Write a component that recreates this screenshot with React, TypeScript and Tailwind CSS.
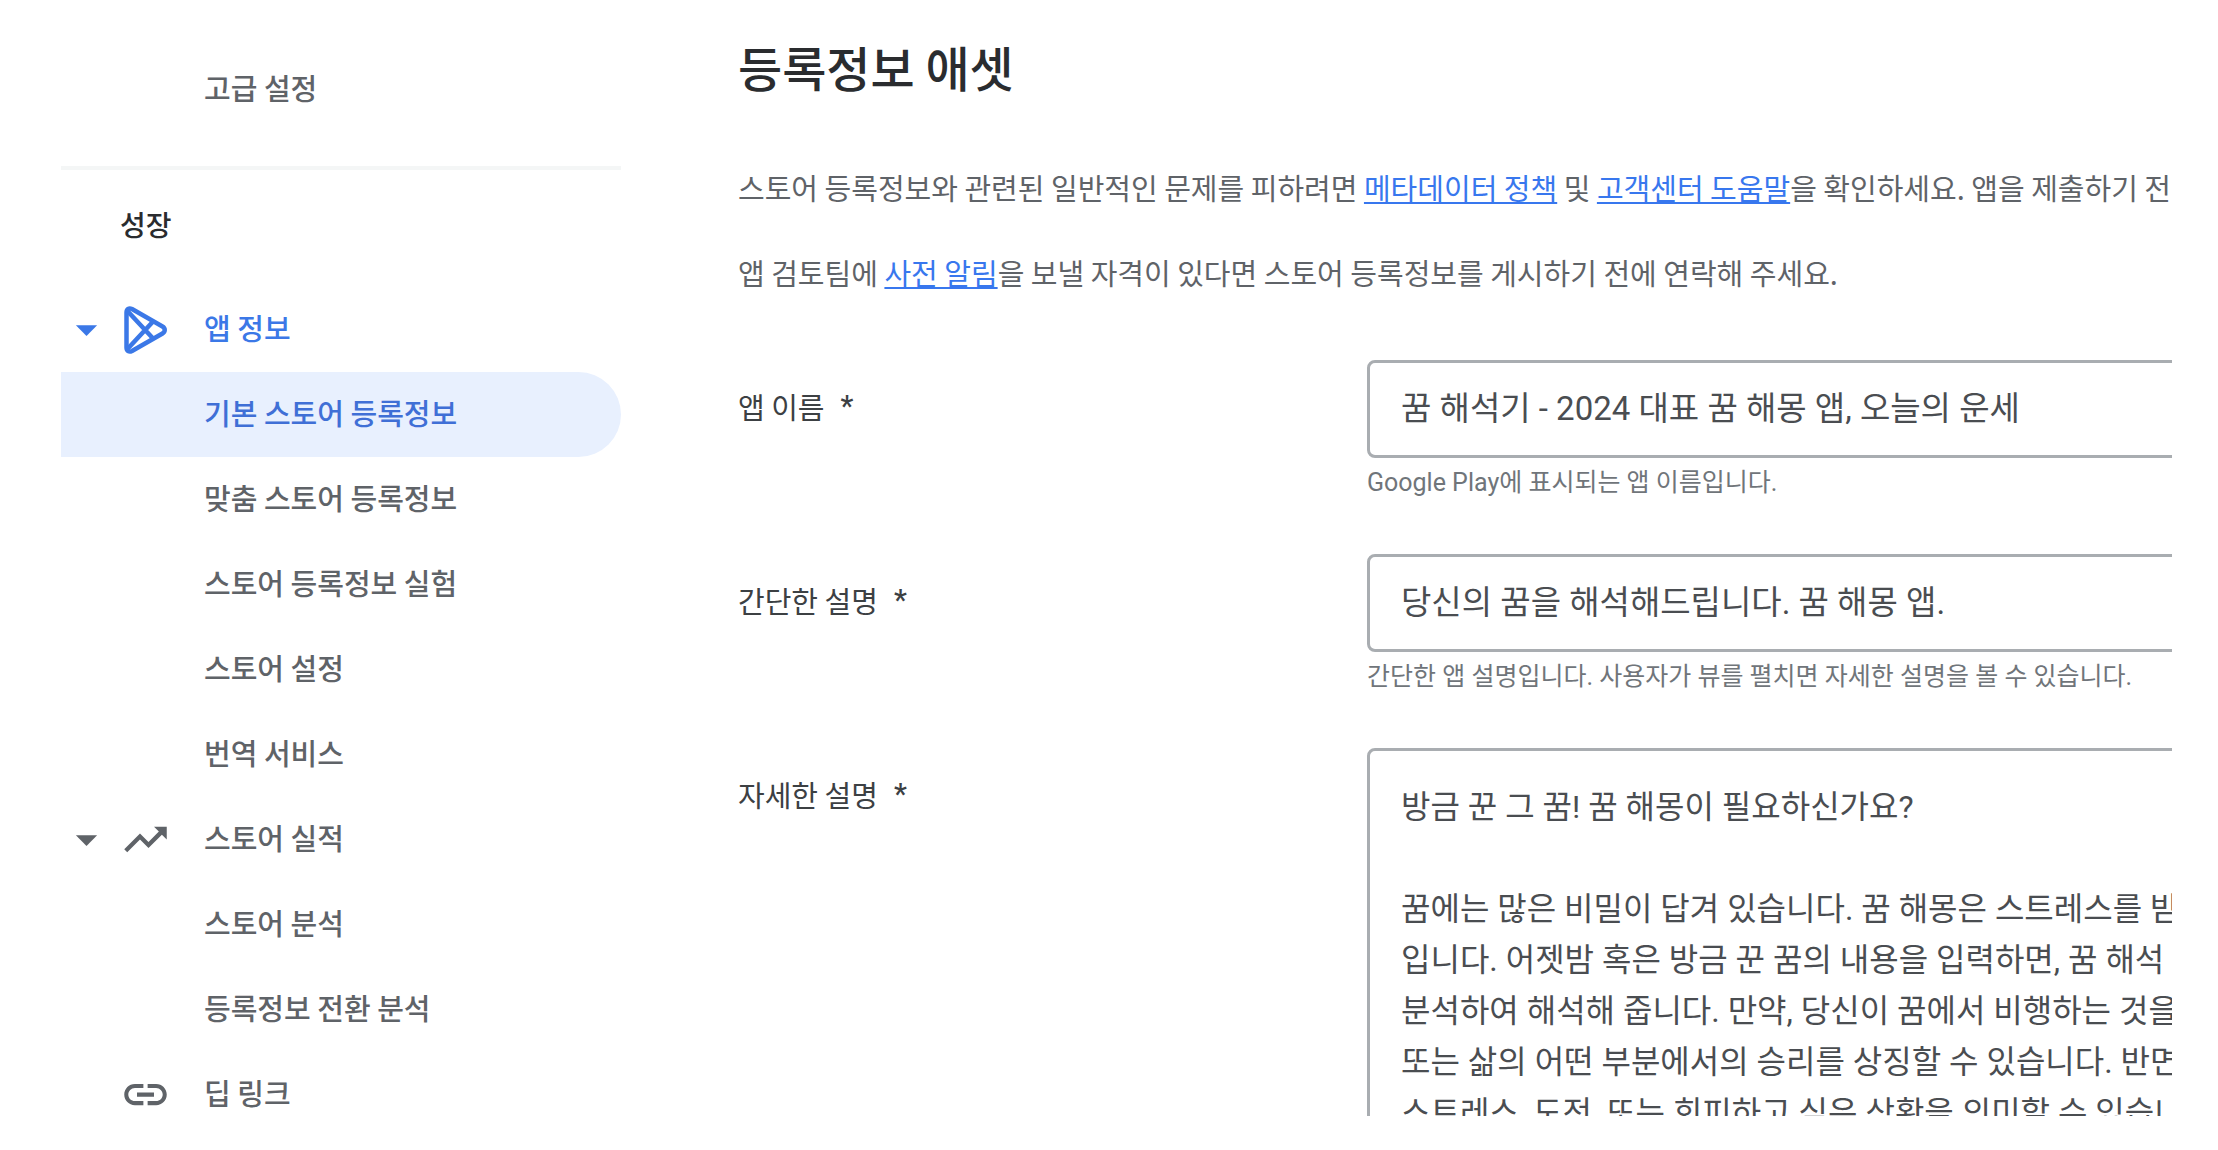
import { MdArrowDropDown, MdLink, MdTrendingUp } from 'react-icons/md';
import clsx from 'clsx';

interface NavItem {
  label: string;
  icon?: 'play' | 'trend' | 'link';
  expandable?: boolean;
  active?: boolean;
  selected?: boolean;
}

const growthItems: NavItem[] = [
  { label: '앱 정보', icon: 'play', expandable: true, active: true },
  { label: '기본 스토어 등록정보', selected: true },
  { label: '맞춤 스토어 등록정보' },
  { label: '스토어 등록정보 실험' },
  { label: '스토어 설정' },
  { label: '번역 서비스' },
  { label: '스토어 실적', icon: 'trend', expandable: true },
  { label: '스토어 분석' },
  { label: '등록정보 전환 분석' },
  { label: '딥 링크', icon: 'link' },
];

const fullDescription = `방금 꾼 그 꿈! 꿈 해몽이 필요하신가요?

꿈에는 많은 비밀이 답겨 있습니다. 꿈 해몽은 스트레스를 받
입니다. 어젯밤 혹은 방금 꾼 꿈의 내용을 입력하면, 꿈 해석
분석하여 해석해 줍니다. 만약, 당신이 꿈에서 비행하는 것을
또는 삶의 어떤 부분에서의 승리를 상징할 수 있습니다. 반면
스트레스, 도전, 또는 회피하고 싶은 상황을 의미할 수 있습니`;

function PlayIcon() {
  return (
    <svg viewBox="0 0 51 51" className="size-[51px]" fill="none" stroke="currentColor" strokeWidth="4.5" strokeLinejoin="round">
      <path d="M6.500 8.500C6.500 5 9 3.500 12 5L42.500 22.500C45.500 24.300 45.500 27.700 42.500 29.500L12 47C9 48.500 6.500 47 6.500 43.500Z" />
      <path d="M7 6.500L34 35.500M7 45.500L34 16.500" />
    </svg>
  );
}

function NavRow({ label, icon, expandable, active, selected }: NavItem) {
  return (
    <a
      href="#"
      className={clsx(
        'flex h-[85px] items-center text-[29px] font-medium',
        selected && 'rounded-r-full bg-[#e8f0fe] text-[#3f6fd6]',
        active && 'text-[#3b78e7]',
        !selected && !active && 'text-[#5f6368]'
      )}
    >
      <span className="w-[59px]">{expandable && <MdArrowDropDown className="size-[51px]" />}</span>
      <span className="w-[84px]">
        {icon === 'play' && <PlayIcon />}
        {icon === 'trend' && <MdTrendingUp className="size-[51px]" />}
        {icon === 'link' && <MdLink className="size-[51px]" />}
      </span>
      <span className="pb-1">{label}</span>
    </a>
  );
}

function Sidebar() {
  return (
    <nav className="w-[560px] shrink-0 pt-[47px]">
      <NavRow label="고급 설정" />
      <hr className="mt-[34px] mb-3 border-t-4 border-[#f4f6f6]" />
      <h2 className="mb-5 pl-[59px] text-[28px] leading-[85px] font-medium text-[#2a2c2f]">성장</h2>
      {growthItems.map((item) => (
        <NavRow key={item.label} {...item} />
      ))}
    </nav>
  );
}

function FieldLabel({ id, text }: { id: string; text: string }) {
  return (
    <label htmlFor={id} className="flex h-[98px] w-[629px] shrink-0 items-center gap-4 pb-1 text-[29px] text-[#3c4043]">
      {text}
      <span className="font-['Roboto',sans-serif] font-medium">*</span>
    </label>
  );
}

function TextField({ id, label, value, hint }: { id: string; label: string; value: string; hint: string }) {
  return (
    <div className="flex h-[194px]">
      <FieldLabel id={id} text={label} />
      <div className="grow font-['Roboto','Noto_Sans_CJK_KR',sans-serif]">
        <input
          id={id}
          type="text"
          defaultValue={value}
          className="block h-[98px] w-full rounded-lg border-3 border-[#a9adb1] px-[31px] pb-1.5 text-[33px] text-[#4a4d51]"
        />
        <p className="mt-1 text-[25px] leading-[42px] text-[#70757a]">{hint}</p>
      </div>
    </div>
  );
}

function DocLink({ children }: { children: string }) {
  return (
    <a href="#" className="text-[#3877ee] underline decoration-2 underline-offset-2">
      {children}
    </a>
  );
}

export default function App() {
  return (
    <div className="h-screen bg-white pr-[46px] pb-[34px] pl-[61px] font-['Noto_Sans_CJK_KR',sans-serif]">
      <div className="flex h-full overflow-hidden">
        <Sidebar />
        {/* Listing form, cut off at the right edge */}
        <main className="ml-[117px] min-w-0 grow overflow-hidden">
          <h1 className="pt-[34px] text-[48px] leading-[64px] font-medium text-[#2a2c2f]">등록정보 애셋</h1>
          <div className="mt-[47px] mb-[45px] text-[29px] leading-[85px] whitespace-nowrap text-[#5f6368]">
            <p>
              스토어 등록정보와 관련된 일반적인 문제를 피하려면 <DocLink>메타데이터 정책</DocLink> 및{' '}
              <DocLink>고객센터 도움말</DocLink>을 확인하세요. 앱을 제출하기 전에
            </p>
            <p>
              앱 검토팀에 <DocLink>사전 알림</DocLink>을 보낼 자격이 있다면 스토어 등록정보를 게시하기 전에 연락해 주세요.
            </p>
          </div>
          <form className="w-[120%]">
            <TextField
              id="app-name"
              label="앱 이름"
              value="꿈 해석기 - 2024 대표 꿈 해몽 앱, 오늘의 운세"
              hint="Google Play에 표시되는 앱 이름입니다."
            />
            <TextField
              id="short-description"
              label="간단한 설명"
              value="당신의 꿈을 해석해드립니다. 꿈 해몽 앱."
              hint="간단한 앱 설명입니다. 사용자가 뷰를 펼치면 자세한 설명을 볼 수 있습니다."
            />
            <div className="flex">
              <FieldLabel id="full-description" text="자세한 설명" />
              <textarea
                id="full-description"
                rows={10}
                defaultValue={fullDescription}
                className="block grow resize-none overflow-hidden rounded-lg border-3 border-[#a9adb1] px-[31px] py-[31px] font-['Roboto','Noto_Sans_CJK_KR',sans-serif] text-[32px] leading-[51px] whitespace-pre text-[#4a4d51]"
              />
            </div>
          </form>
        </main>
      </div>
    </div>
  );
}
